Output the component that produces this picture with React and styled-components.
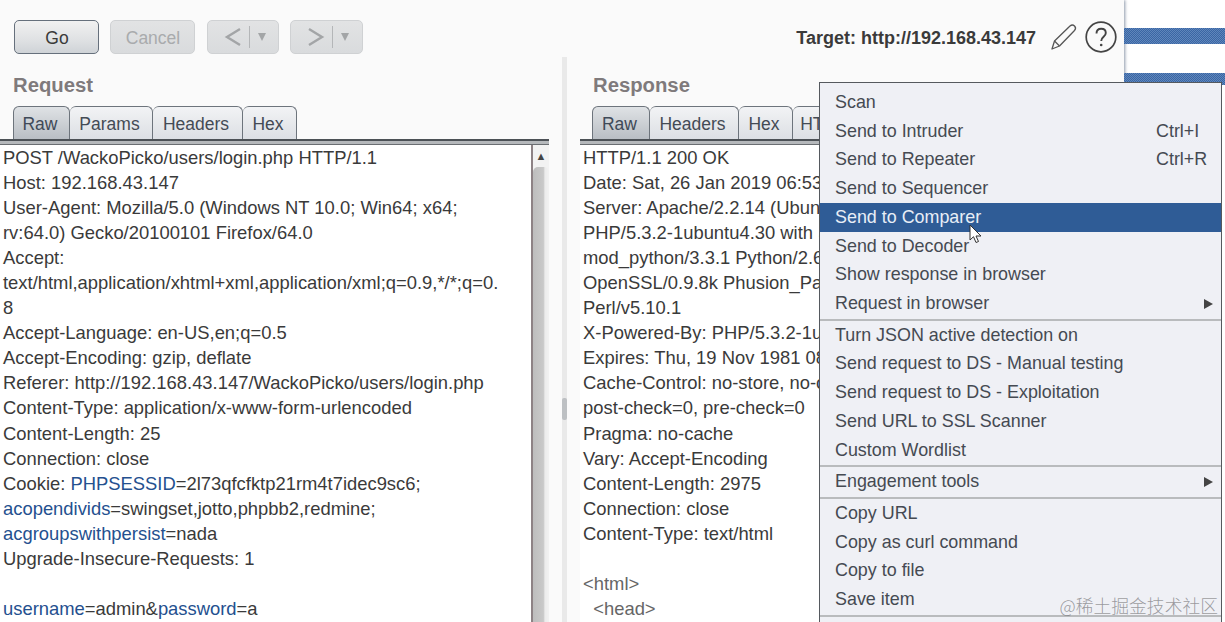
import styled, { createGlobalStyle } from 'styled-components'

const GlobalStyle = createGlobalStyle`
  html, body { margin: 0; padding: 0; background: #fff; }
  body { font-family: "Liberation Sans", Arial, sans-serif; }
`

const Shell = styled.div`
  position: relative;
  display: flex;
  width: 1225px;
  height: 622px;
  overflow: hidden;
  background: #fff;
`
const Workspace = styled.div`
  display: flex;
  flex-direction: column;
  width: 1124px;
  height: 622px;
  flex: none;
  background: #fafafa;
  box-shadow: 1px 0 3px #8b97a8;
`
const Toolbar = styled.div`
  display: flex;
  align-items: flex-start;
  height: 57px;
  box-sizing: border-box;
  padding: 20px 7px 0 14px;
  flex: none;
`
const ToolButton = styled.div`
  display: flex;
  align-items: center;
  justify-content: center;
  box-sizing: border-box;
  width: ${(p) => p.$w}px;
  height: 34px;
  padding: 2px 0 0 1px;
  margin-right: ${(p) => p.$gap}px;
  border-radius: 5px;
  font-size: 17.5px;
  border: 1px solid ${(p) => (p.$off ? '#cfd1d3' : '#66707c')};
  color: ${(p) => (p.$off ? '#a9abad' : '#3a3a3a')};
  background: ${(p) =>
    p.$off ? 'linear-gradient(#e2e3e4, #d9dbdd)' : 'linear-gradient(#f1f1f1, #dfe1e3 60%, #cfd3d7)'};
`
const NavButton = styled(ToolButton)`
  gap: 7px;
  padding: 0 0 0 4px;
`
const NavDivider = styled.span`
  width: 1px;
  height: 22px;
  background: #b4b6b8;
`
const TargetBar = styled.div`
  display: flex;
  align-items: center;
  margin-left: auto;
  height: 34px;
`
const TargetText = styled.span`
  padding-top: 2px;
  font-size: 18px;
  font-weight: 700;
  color: #3a3a3a;
  margin-right: 14px;
`
const HelpIcon = styled.svg`
  margin-left: 7px;
`
const Panes = styled.div`
  display: flex;
  flex: 1;
  min-height: 0;
`
const Pane = styled.section`
  display: flex;
  flex-direction: column;
  width: ${(p) => p.$w}px;
  flex: none;
  min-width: 0;
`
const PaneTitle = styled.h2`
  margin: 0;
  height: 49px;
  box-sizing: border-box;
  padding: 16px 0 0 ${(p) => p.$pad}px;
  font-size: 20.3px;
  line-height: 24px;
  font-weight: 700;
  color: #7f7a7c;
`
const TabRow = styled.div`
  display: flex;
  height: 33px;
  box-sizing: border-box;
  padding-left: ${(p) => p.$pad}px;
  flex: none;
`
const Tab = styled.div`
  display: flex;
  align-items: center;
  justify-content: center;
  box-sizing: border-box;
  width: ${(p) => p.$w}px;
  flex: none;
  padding: 2px 3px 0 0;
  font-size: 17.5px;
  color: ${(p) => (p.$on ? '#3f4a58' : '#444b55')};
  border: 1px solid #6d747c;
  border-bottom: 0;
  border-left-width: ${(p) => (p.$first ? 1 : 0)}px;
  border-radius: 6px 6px 0 0;
  background: ${(p) =>
    p.$on ? 'linear-gradient(#dfe2e5, #b9bec4)' : 'linear-gradient(#f2f3f5, #dcdfe4)'};
`
const TabRule = styled.div`
  height: 6px;
  flex: none;
  box-sizing: border-box;
  border-top: 2px solid #4c5156;
  border-bottom: 1px solid #6a6e72;
  background: #b5b8bb;
`
const EditorBody = styled.div`
  display: flex;
  flex: 1;
  min-height: 0;
  background: #fff;
`
const CodeArea = styled.div`
  flex: 1;
  min-width: 0;
  overflow: hidden;
  padding: 0 0 0 ${(p) => p.$pad}px;
  font-size: 18.4px;
  line-height: 25.05px;
  color: #3a3a3a;
  white-space: nowrap;
`
const CodeLine = styled.div`
  min-height: 25.05px;
  color: ${(p) => (p.$muted ? '#666' : 'inherit')};
`
const Key = styled.span`
  color: #24508f;
`
const Scrollbar = styled.div`
  display: flex;
  flex-direction: column;
  width: 18px;
  flex: none;
  border-left: 2px solid #8d8285;
  box-sizing: border-box;
  background: #f2f2f2;
`
const ScrollUp = styled.div`
  display: flex;
  align-items: center;
  justify-content: center;
  height: 22px;
  flex: none;
  color: #444;
  font-size: 11px;
`
const ScrollThumb = styled.div`
  flex: 1;
  border-radius: 5px 5px 0 0;
  background: linear-gradient(90deg, #bdbdbd, #c9c9c9 65%, #ececec 75%, #f2f2f2);
`
const Splitter = styled.div`
  display: flex;
  flex-direction: column;
  align-items: center;
  width: 31px;
  flex: none;
`
const SplitLine = styled.div`
  position: relative;
  width: 5px;
  flex: 1;
  background: #e9e9e9;
`
const SplitHandle = styled.div`
  position: absolute;
  top: 341px;
  left: 0;
  width: 5px;
  height: 22px;
  border-radius: 2px;
  background: #bdc0c3;
`
const SideStrip = styled.aside`
  display: flex;
  flex-direction: column;
  flex: 1;
  padding-top: 28px;
`
const StripeBar = styled.div`
  height: ${(p) => p.$h}px;
  margin-bottom: ${(p) => p.$gap}px;
  flex: none;
  background: repeating-conic-gradient(#3a66a4 0 25%, #5f86bb 0 50%) 0 0 / 2px 2px;
`
const Menu = styled.div`
  position: absolute;
  left: 819px;
  top: 82px;
  width: 403px;
  height: 560px;
  box-sizing: border-box;
  padding-top: 5px;
  background: #eff0f5;
  border: 1px solid #55595e;
  border-bottom: 0;
  font-size: 17.9px;
  color: #454a52;
`
const MenuRow = styled.div`
  display: flex;
  align-items: center;
  justify-content: space-between;
  box-sizing: border-box;
  height: 28.75px;
  padding: 0 15px 0 15px;
  color: ${(p) => (p.$active ? '#e8eef6' : 'inherit')};
  background: ${(p) => (p.$active ? '#2f5c96' : 'transparent')};
`
const Shortcut = styled.span`
  width: 50px;
`
const SubArrow = styled.span`
  width: 0;
  height: 0;
  margin-right: -7px;
  border-left: 9px solid #444;
  border-top: 5px solid transparent;
  border-bottom: 5px solid transparent;
`
const MenuSeparator = styled.div`
  height: 2px;
  margin-top: 0.8px;
  background: #b9bbbd;
`
const Pointer = styled.svg`
  position: absolute;
  left: 969px;
  top: 224px;
`
const Watermark = styled.div`
  position: absolute;
  right: 7px;
  top: 594px;
  font-family: "Noto Sans CJK SC", "Liberation Sans", sans-serif;
  font-size: 17.8px;
  line-height: 22px;
  font-weight: 300;
  color: rgba(125, 125, 130, 0.75);
`

const requestTabs = [
  { label: 'Raw', w: 57, on: true },
  { label: 'Params', w: 83 },
  { label: 'Headers', w: 90 },
  { label: 'Hex', w: 54 },
]
const responseTabs = [
  { label: 'Raw', w: 58, on: true },
  { label: 'Headers', w: 89 },
  { label: 'Hex', w: 54 },
  { label: 'HTML', w: 66 },
]

const requestLines = [
  'POST /WackoPicko/users/login.php HTTP/1.1',
  'Host: 192.168.43.147',
  'User-Agent: Mozilla/5.0 (Windows NT 10.0; Win64; x64;',
  'rv:64.0) Gecko/20100101 Firefox/64.0',
  'Accept:',
  'text/html,application/xhtml+xml,application/xml;q=0.9,*/*;q=0.',
  '8',
  'Accept-Language: en-US,en;q=0.5',
  'Accept-Encoding: gzip, deflate',
  'Referer: http://192.168.43.147/WackoPicko/users/login.php',
  'Content-Type: application/x-www-form-urlencoded',
  'Content-Length: 25',
  'Connection: close',
  <>Cookie: <Key>PHPSESSID</Key>=2l73qfcfktp21rm4t7idec9sc6;</>,
  <><Key>acopendivids</Key>=swingset,jotto,phpbb2,redmine;</>,
  <><Key>acgroupswithpersist</Key>=nada</>,
  'Upgrade-Insecure-Requests: 1',
  '',
  <><Key>username</Key>=admin&amp;<Key>password</Key>=a</>,
]

// the popup menu covers the rest of these lines, only the visible part is kept
const responseLines = [
  'HTTP/1.1 200 OK',
  'Date: Sat, 26 Jan 2019 06:53',
  'Server: Apache/2.2.14 (Ubun',
  'PHP/5.3.2-1ubuntu4.30 with S',
  'mod_python/3.3.1 Python/2.6',
  'OpenSSL/0.9.8k Phusion_Pa',
  'Perl/v5.10.1',
  'X-Powered-By: PHP/5.3.2-1u',
  'Expires: Thu, 19 Nov 1981 08',
  'Cache-Control: no-store, no-c',
  'post-check=0, pre-check=0',
  'Pragma: no-cache',
  'Vary: Accept-Encoding',
  'Content-Length: 2975',
  'Connection: close',
  'Content-Type: text/html',
  '',
  '<html>',
  '\u00a0\u00a0<head>',
]

const menuGroups = [
  [
    { label: 'Scan' },
    { label: 'Send to Intruder', keys: 'Ctrl+I' },
    { label: 'Send to Repeater', keys: 'Ctrl+R' },
    { label: 'Send to Sequencer' },
    { label: 'Send to Comparer', active: true },
    { label: 'Send to Decoder' },
    { label: 'Show response in browser' },
    { label: 'Request in browser', sub: true },
  ],
  [
    { label: 'Turn JSON active detection on' },
    { label: 'Send request to DS - Manual testing' },
    { label: 'Send request to DS - Exploitation' },
    { label: 'Send URL to SSL Scanner' },
    { label: 'Custom Wordlist' },
  ],
  [{ label: 'Engagement tools', sub: true }],
  [
    { label: 'Copy URL' },
    { label: 'Copy as curl command' },
    { label: 'Copy to file' },
    { label: 'Save item' },
  ],
]

function Chevron({ dir }) {
  return (
    <svg width="18" height="22" viewBox="0 0 18 22" fill="none" stroke="#a3a5a7" strokeWidth="2.4">
      <path d={dir === 'left' ? 'M16 3 3 11l13 8' : 'M2 3l13 8-13 8'} />
    </svg>
  )
}

function DropArrow() {
  return (
    <svg width="10" height="8" viewBox="0 0 10 8">
      <path d="M1 0h8L5 8z" fill="#a3a5a7" />
    </svg>
  )
}

function EditorPane({ w, title, titlePad, tabPad, tabs, lines, codePad, scroll }) {
  return (
    <Pane $w={w}>
      <PaneTitle $pad={titlePad}>{title}</PaneTitle>
      <TabRow $pad={tabPad}>
        {tabs.map((t, i) => (
          <Tab key={t.label} $w={t.w} $on={t.on} $first={i === 0}>{t.label}</Tab>
        ))}
      </TabRow>
      <TabRule />
      <EditorBody>
        <CodeArea $pad={codePad}>
          {lines.map((line, i) => (
            <CodeLine key={i} $muted={typeof line === 'string' && line.includes('<')}>{line}</CodeLine>
          ))}
        </CodeArea>
        {scroll && (
          <Scrollbar>
            <ScrollUp>▲</ScrollUp>
            <ScrollThumb />
          </Scrollbar>
        )}
      </EditorBody>
    </Pane>
  )
}

export default function App() {
  return (
    <>
      <GlobalStyle />
      <Shell>
        <Workspace>
          <Toolbar>
            <ToolButton $w={85} $gap={11}>Go</ToolButton>
            <ToolButton $w={85} $gap={12} $off>Cancel</ToolButton>
            <NavButton $w={72} $gap={11} $off>
              <Chevron dir="left" /><NavDivider /><DropArrow />
            </NavButton>
            <NavButton $w={73} $gap={0} $off>
              <Chevron dir="right" /><NavDivider /><DropArrow />
            </NavButton>
            <TargetBar>
              <TargetText>Target: http://192.168.43.147</TargetText>
              <svg width="28" height="28" viewBox="0 0 28 28" fill="none" stroke="#555" strokeWidth="1.3" strokeLinejoin="round">
                <path d="M2 26l2.500-8L20 3c1.500-1.300 3.200-1.300 4.500 0s1.300 3 0 4.500L9.500 23z" />
                <path d="M4.500 18l5 5" />
              </svg>
              <HelpIcon width="32" height="32" viewBox="0 0 32 32" fill="none" stroke="#444" strokeWidth="1.7">
                <circle cx="16" cy="16" r="14.800" />
                <path d="M11.500 12.500c0-3 2-4.700 4.700-4.700s4.600 1.700 4.600 4.200c0 3.800-4.600 3.800-4.600 8" strokeWidth="1.900" />
                <circle cx="16.200" cy="24" r="1.300" fill="#444" stroke="none" />
              </HelpIcon>
            </TargetBar>
          </Toolbar>
          <Panes>
            <EditorPane w={549} title="Request" titlePad={13} tabPad={13} tabs={requestTabs} lines={requestLines} codePad={3} scroll />
            <Splitter>
              <SplitLine><SplitHandle /></SplitLine>
            </Splitter>
            <EditorPane w={544} title="Response" titlePad={13} tabPad={12} tabs={responseTabs} lines={responseLines} codePad={3} />
          </Panes>
        </Workspace>
        <SideStrip>
          <StripeBar $h={16} $gap={29} />
          <StripeBar $h={12} $gap={0} />
        </SideStrip>
        <Menu>
          {menuGroups.map((group, g) => (
            <div key={g}>
              {g > 0 && <MenuSeparator />}
              {group.map((item) => (
                <MenuRow key={item.label} $active={item.active}>
                  <span>{item.label}</span>
                  {item.keys && <Shortcut>{item.keys}</Shortcut>}
                  {item.sub && <SubArrow />}
                </MenuRow>
              ))}
            </div>
          ))}
          <MenuSeparator />
        </Menu>
        <Pointer width="15" height="20" viewBox="0 0 15 20">
          <path d="M1 1v15l3.500-3.300L7 18.500l2.500-1-2.500-5.500h5z" fill="#fff" stroke="#333" strokeWidth="1" />
        </Pointer>
        <Watermark>@稀土掘金技术社区</Watermark>
      </Shell>
    </>
  )
}
